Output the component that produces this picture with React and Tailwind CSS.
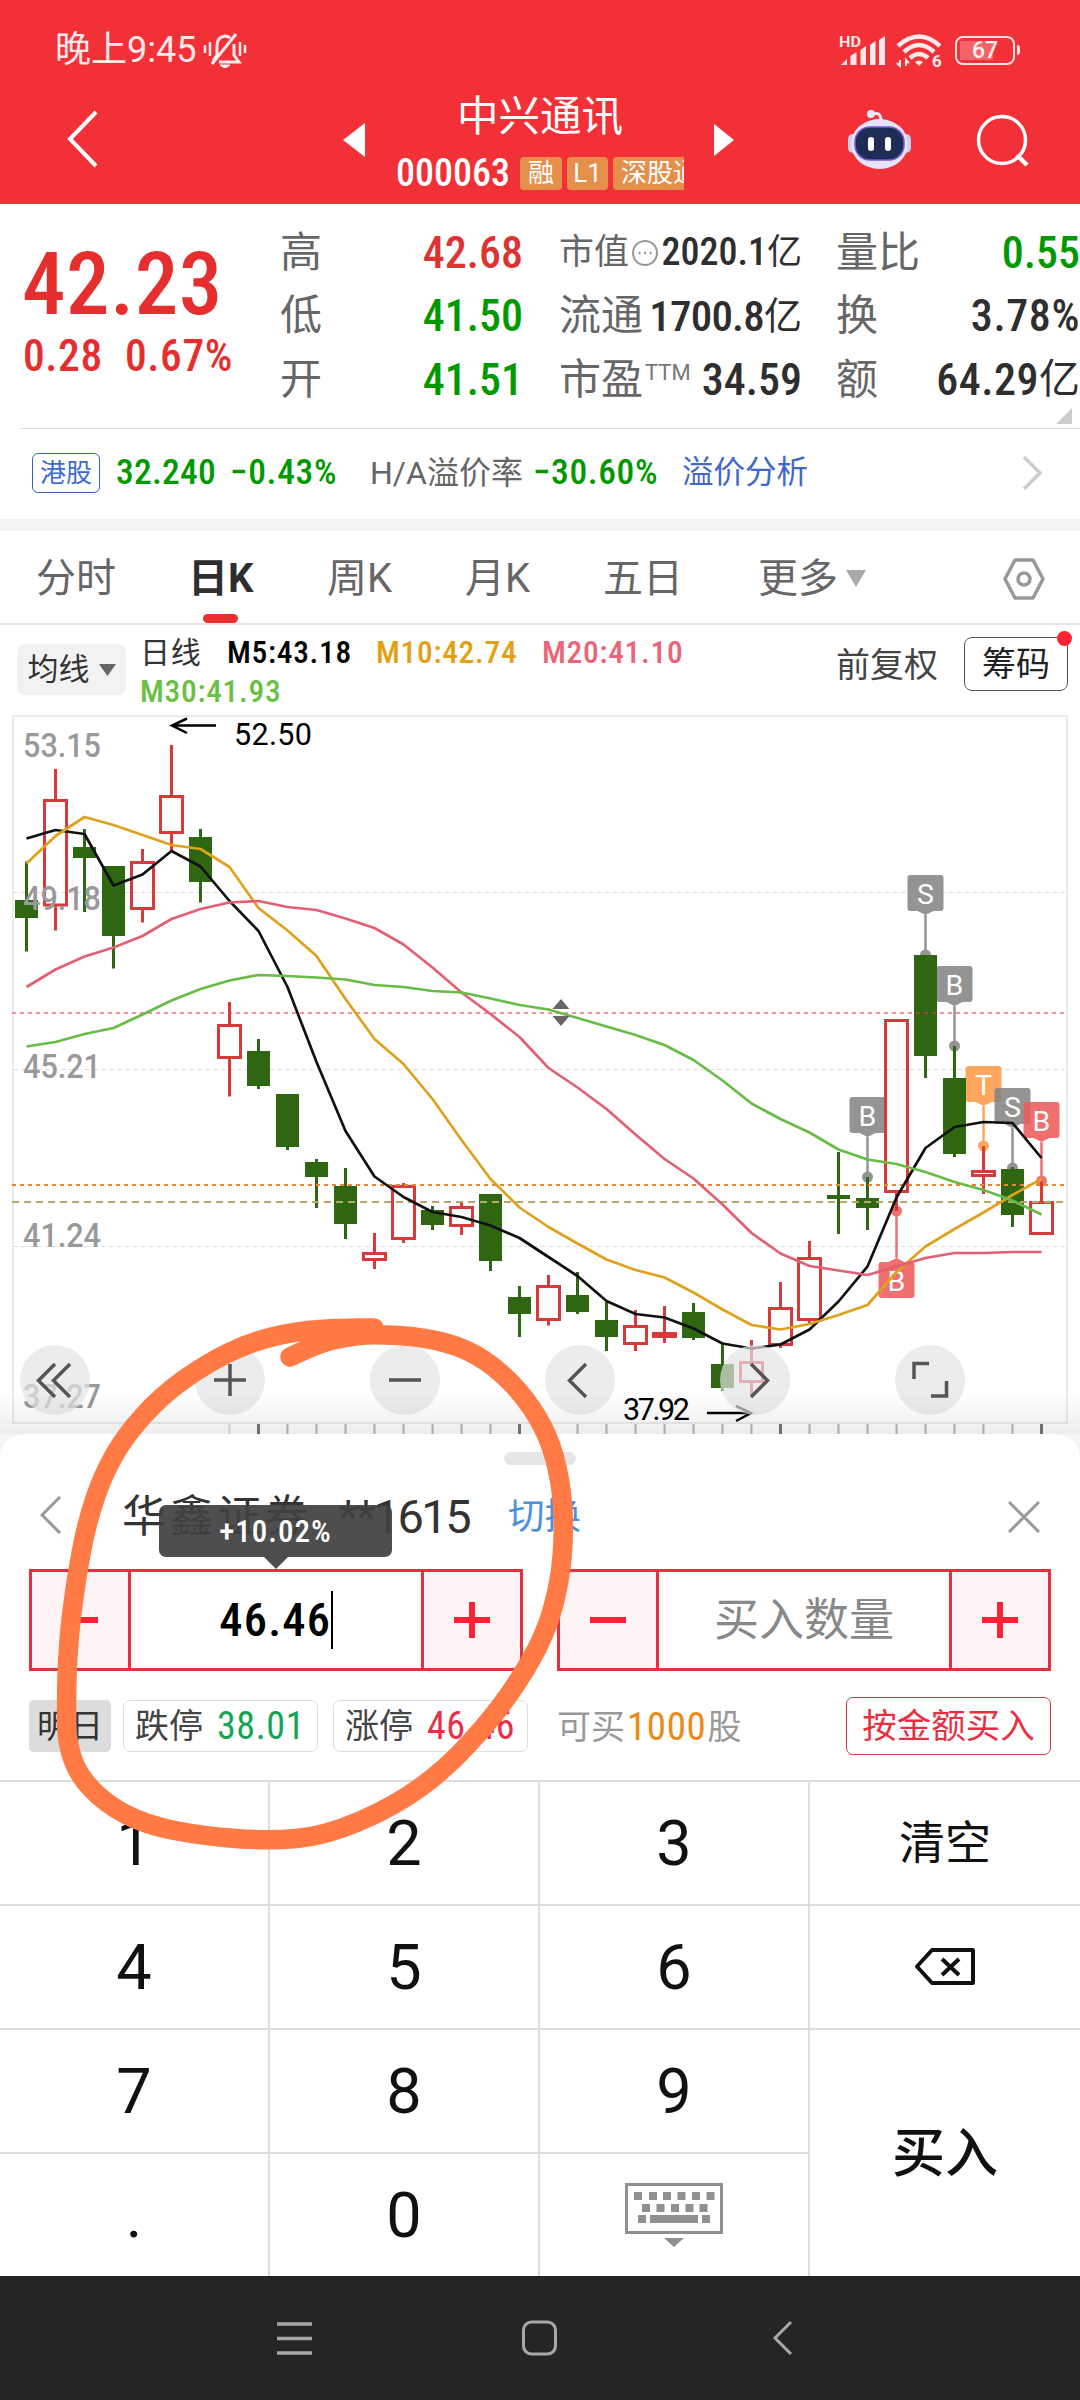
import { clsx } from "clsx";

const RED = "#d63a3a";
const GREEN = "#2f6611";

// [type, high, body top, body bottom, low]
const CANDLES = [
    ["g", 861.5, 900, 918, 951.5],
    ["r", 769, 799, 906.5, 930.5],
    ["g", 829, 847, 858, 912],
    ["g", 866, 866, 936, 968.5],
    ["r", 849, 861, 910, 922.5],
    ["r", 745, 795, 834, 851],
    ["g", 829, 837, 882, 902.5],
    ["r", 1002, 1024, 1059, 1096.5],
    ["g", 1039, 1051, 1086, 1089],
    ["g", 1094, 1094, 1147, 1150],
    ["g", 1159, 1162, 1177, 1208],
    ["g", 1168, 1186, 1224, 1239],
    ["r", 1233, 1252, 1261, 1269],
    ["r", 1183, 1185, 1240, 1243],
    ["g", 1206, 1210, 1225, 1230],
    ["r", 1201, 1206, 1227, 1235],
    ["g", 1194, 1194, 1261, 1271],
    ["g", 1286, 1297, 1314, 1337],
    ["r", 1275, 1285, 1321, 1325.5],
    ["g", 1272, 1295, 1312, 1314],
    ["g", 1302, 1320, 1337, 1351],
    ["r", 1310, 1325, 1345, 1351],
    ["r", 1306, 1332, 1338, 1343],
    ["g", 1303, 1312, 1338, 1340],
    ["g", 1343, 1364, 1388, 1391],
    ["r", 1340, 1361, 1383, 1395],
    ["r", 1282, 1307, 1346, 1348],
    ["r", 1241, 1257, 1321, 1323],
    ["g", 1152, 1195, 1199, 1234],
    ["g", 1177, 1198, 1208, 1230],
    ["r", 1019, 1019, 1193, 1211],
    ["g", 955, 955, 1056, 1078],
    ["g", 1046, 1078, 1154, 1157],
    ["r", 1146, 1170, 1177, 1194],
    ["g", 1167, 1169, 1215, 1227],
    ["r", 1181.5, 1201, 1235, 1235],
];

const MA5 = [
    838.5, 830, 834, 885.5, 874.5, 851, 866.5, 901, 931, 987, 1062, 1131, 1176.5, 1197, 1212, 1217, 1225.5, 1238,
    1257, 1276, 1301, 1314, 1317.5, 1328.5, 1343.5, 1348.5, 1344.5, 1329.5, 1301.5, 1266.5, 1197.5, 1148, 1127,
    1122, 1123, 1158,
];
const MA10 = [
    863.5, 836, 817, 825, 835, 845, 849, 867, 908, 930.5, 956, 999, 1039, 1064, 1099, 1140, 1179, 1207.5, 1227,
    1243.5, 1259.5, 1270, 1277.5, 1292.5, 1309.5, 1325, 1329.5, 1324, 1315, 1305, 1272, 1246.5, 1229, 1212.5, 1195,
    1179,
];
const MA20 = [
    987, 969.5, 956.5, 947.5, 936, 919, 909, 902.5, 901, 907, 910, 918.5, 928, 944.5, 967.5, 992.5, 1014, 1037,
    1068, 1087.5, 1109, 1134.5, 1159, 1178.5, 1204.5, 1233, 1253.5, 1266, 1270.5, 1275, 1266.5, 1258, 1253, 1253,
    1252, 1252,
];
const MA30 = [
    1046.5, 1042, 1034, 1028, 1014.5, 1000.5, 989, 980.5, 975, 976, 977.5, 979.5, 985, 987, 991, 992.5, 998.5, 1005,
    1009.5, 1018, 1026.5, 1035, 1045, 1060, 1080.5, 1103.5, 1119, 1132.5, 1149.5, 1159.5, 1164, 1172, 1182, 1190,
    1200.5, 1214.5,
];

// box = top of the label, dot = price point it refers to
const MARKERS = [
    { i: 29, text: "B", box: 1097, dot: 1177, color: "#868686" },
    { i: 31, text: "S", box: 875, dot: 955, color: "#868686" },
    { i: 32, text: "B", box: 966, dot: 1046, color: "#868686" },
    { i: 33, text: "T", box: 1066, dot: 1146, color: "#ff9a4a" },
    { i: 34, text: "S", box: 1088, dot: 1168, color: "#868686" },
    { i: 35, text: "B", box: 1102, dot: 1181, color: "#ee5c5c" },
    { i: 30, text: "B", box: 1262, dot: 1211, color: "#ee5c5c", below: true },
];

const LOOP = [
    [290, 1357], [317, 1344], [345, 1337], [372, 1334], [424, 1337], [468, 1349], [504, 1374], [533, 1408],
    [552, 1445], [562, 1490], [564, 1535], [560, 1580], [548, 1627], [526, 1670], [494, 1716], [446, 1769],
    [393, 1807], [325, 1836], [268, 1841], [203, 1836], [146, 1825], [106, 1804], [78, 1775], [67, 1742],
    [66.5, 1710], [67, 1665], [71, 1617], [79, 1563], [88, 1519], [103, 1475], [125, 1436], [162, 1395],
    [206, 1364], [248, 1343], [296, 1331], [344, 1328], [374, 1328],
];

const cx = (i) => 26.5 + i * 29;

const toPoints = (values) => values.map((y, i) => `${cx(i)},${y}`).join(" ");

const smooth = (pts) => {
    let d = `M${pts[0][0]} ${pts[0][1]}`;
    for (let i = 1; i < pts.length - 1; i++) {
        const mx = (pts[i][0] + pts[i + 1][0]) / 2;
        const my = (pts[i][1] + pts[i + 1][1]) / 2;
        d += ` Q${pts[i][0]} ${pts[i][1]} ${mx} ${my}`;
    }
    const last = pts[pts.length - 1];
    return `${d} L${last[0]} ${last[1]}`;
};

const Num = ({ className, light }) => clsx(
    "whitespace-nowrap font-stretch-semi-condensed",
    light ? "font-normal" : "font-medium",
    className
);

const Figure = ({ className, light, children }) => (
    <span className={Num({ className, light })}>{children}</span>
);

const StatusBar = () => (
    <div className="flex h-[84px] items-end justify-between pr-[60px] pb-[16px] pl-[55px] text-white/90">
        <div className="flex h-[36px] items-center">
            <span className="text-[36px] leading-none">晚上9:45</span>
            <svg className="ml-[7px]" width="44" height="38" viewBox="0 0 44 38" fill="none" stroke="currentColor" strokeWidth="3">
                <path d="M10 30 L14 24 V15 Q14 6 22 5 Q25 5 27 7 M31 13 V24 L36 31 H16" />
                <path d="M33 3 L9 33" />
                <path d="M7 11 V25 M2 14 V22 M37 11 V25 M42 14 V22" strokeWidth="2.5" />
                <path d="M17 34 Q22 39 27 34 Z" fill="currentColor" strokeWidth="1" />
            </svg>
        </div>
        <div className="flex h-[36px] items-center">
            <svg className="overflow-visible" width="124" height="36" viewBox="0 0 124 36" fill="currentColor">
                <text x="0" y="15" fontSize="15.5" fontWeight="600" textLength="22" lengthAdjust="spacingAndGlyphs">HD</text>
                <path d="M2 33 L8 27 V33Z M11.500 24 L17.500 20 V33 H11.500Z M21.500 18 L27 14 V33 H21.500Z M31 13 L36.500 9 V33 H31Z M40 8 L46 4 V33 H40Z" />
                <g fill="none" stroke="currentColor" strokeWidth="4.5">
                    <path d="M59 14 Q80 -5 101 14" />
                    <path d="M65 20 Q80 6 95 20" />
                    <path d="M71 26 Q80 18 89 26" />
                </g>
                <path d="M76 30 Q80 27 84 30 L80 34Z" />
                <path d="M61 28 V34 L58 31 M67 34 V28 L70 31" fill="none" stroke="currentColor" strokeWidth="2" />
                <text x="93" y="34.500" fontSize="17" fontWeight="700">6</text>
            </svg>
            <div className="flex items-center">
                <div className="ml-[-8px] flex h-[29px] w-[60px] items-center justify-center rounded-[8px] border-[2.5px] border-white/85 p-[3px]">
                    <div className="flex h-full w-full items-center justify-center bg-linear-to-r from-white/25 from-66% to-transparent to-66%">
                        <span className="text-[23px] leading-none font-medium">67</span>
                    </div>
                </div>
                <div className="ml-[2px] h-[10px] w-[3px] rounded-r bg-white/85" />
            </div>
        </div>
    </div>
);

const RobotIcon = () => (
    <svg width="66" height="62" viewBox="0 0 66 62">
        <path d="M24 7 Q34 2 34 13" fill="none" stroke="#eceafc" strokeWidth="3" />
        <circle cx="24" cy="6" r="4" fill="#f3e9fb" />
        <rect x="1" y="26" width="10" height="19" rx="5" fill="#c9cdf2" />
        <rect x="54" y="26" width="10" height="19" rx="5" fill="#c9cdf2" />
        <ellipse cx="32.500" cy="36" rx="28.500" ry="25" fill="#e6e4f9" />
        <rect x="8" y="19" width="49" height="33" rx="15" fill="#1e2d57" stroke="#7a58d8" strokeWidth="1.500" />
        <rect x="21" y="29" width="6" height="14" rx="3" fill="#fff" />
        <rect x="38" y="29" width="6" height="14" rx="3" fill="#fff" />
    </svg>
);

const Header = () => (
    <div className="flex h-[120px] items-start text-white">
        <svg className="mt-[24px] ml-[62px]" width="40" height="62" viewBox="0 0 40 62" fill="none" stroke="#fff" strokeWidth="4">
            <path d="M34 4 L8 31 L34 58" />
        </svg>
        <svg className="mt-[38px] ml-[241px]" width="22" height="36" viewBox="0 0 22 36" fill="#fff">
            <path d="M22 1 V35 L0 18Z" />
        </svg>
        <div className="ml-[31px] flex w-[288px] flex-col">
            <div className="mt-[11px] text-center text-[41.5px] leading-[44px]">中兴通讯</div>
            <div className="mt-[12px] flex h-[44px] items-center overflow-hidden text-[26px] leading-none">
                <Figure className="w-[124px] shrink-0 text-[38px] leading-[44px]">000063</Figure>
                <span className="flex h-[33px] w-[42px] shrink-0 items-center justify-center rounded bg-[#e58f4a]">融</span>
                <span className="ml-[5px] flex h-[33px] w-[41px] shrink-0 items-center justify-center rounded bg-[#e58f4a]">L1</span>
                <span className="ml-[5px] flex h-[33px] w-[94px] shrink-0 items-center rounded bg-[#e58f4a] pl-[8px]">深股通</span>
            </div>
        </div>
        <svg className="mt-[39px] ml-[30px]" width="20" height="34" viewBox="0 0 20 34" fill="#fff">
            <path d="M0 1 V33 L20 17Z" />
        </svg>
        <div className="mt-[24px] ml-[113px]">
            <RobotIcon />
        </div>
        <svg className="mt-[28px] ml-[61px]" width="58" height="58" viewBox="0 0 58 58" fill="none" stroke="#fff" strokeWidth="3.500">
            <circle cx="28" cy="28" r="23.500" />
            <path d="M43 43 L53 53" strokeWidth="4.500" />
        </svg>
    </div>
);

const Cell = ({ label, children }) => (
    <div className="flex h-[63.5px] items-center justify-between">
        <span className="flex items-center text-[42px] leading-none text-[#666]">{label}</span>
        {children}
    </div>
);

const Quote = () => (
    <div className="flex h-[224px] pl-[22px]">
        <div className="w-[258px] text-[#e52f2f]">
            <Figure className="mt-[35px] block text-[87px] leading-[90px] tracking-[0.5px]">42.23</Figure>
            <div className="flex h-[56px] items-center pl-[1px] text-[43.5px] leading-none tracking-[0.6px]">
                <Figure className="w-[102px]">0.28</Figure>
                <Figure>0.67%</Figure>
            </div>
        </div>
        <div className="mt-[17px] w-[243px]">
            <Cell label="高"><Figure className="text-[44px] text-[#dc3333]">42.68</Figure></Cell>
            <Cell label="低"><Figure className="text-[44px] text-[#009900]">41.50</Figure></Cell>
            <Cell label="开"><Figure className="text-[44px] text-[#009900]">41.51</Figure></Cell>
        </div>
        <div className="mt-[17px] ml-[36px] w-[243px] text-[#2e2e2e]">
            <div className="flex h-[63.5px] items-center text-[35px]">
                <span className="text-[#666]">市值</span>
                <svg className="ml-[2px]" width="28" height="28" viewBox="0 0 28 28" fill="none" stroke="#999" strokeWidth="2">
                    <circle cx="14" cy="14" r="12" />
                    <path d="M7.500 14h2 M13 14h2 M18.500 14h2" strokeWidth="2.500" />
                </svg>
                <span className="ml-auto flex items-center"><Figure className="text-[38px]">2020.1</Figure>亿</span>
            </div>
            <Cell label="流通"><span className="flex items-center text-[38px]"><Figure className="text-[43px] tracking-[-0.8px]">1700.8</Figure>亿</span></Cell>
            <Cell label={<>市盈<span className="mb-[14px] ml-[2px] text-[22px] text-[#777]">TTM</span></>}>
                <Figure className="text-[44px]">34.59</Figure>
            </Cell>
        </div>
        <div className="relative mt-[17px] ml-[34px] w-[244px] text-[#2e2e2e]">
            <Cell label="量比"><Figure className="text-[44px] text-[#009900]">0.55</Figure></Cell>
            <Cell label="换"><Figure className="text-[44px] tracking-[0.6px]">3.78%</Figure></Cell>
            <Cell label="额"><span className="flex items-center text-[41px]"><Figure className="text-[44px] tracking-[0.5px]">64.29</Figure>亿</span></Cell>
            <svg className="absolute right-[8px] bottom-[4px]" width="16" height="16" viewBox="0 0 16 16" fill="#ccc">
                <path d="M16 0 V16 H0Z" />
            </svg>
        </div>
    </div>
);

const HkRow = () => (
    <div className="ml-[20px] flex h-[91px] items-center border-t border-[#ddd] pb-[3px] pl-[12px] text-[32px] leading-none">
        <span className="flex h-[40px] w-[68px] items-center justify-center rounded-[6px] border border-[#3a64b8] text-[26px] text-[#3b6ad0]">港股</span>
        <Figure className="ml-[16px] w-[114px] text-[35.5px] tracking-[0.2px] text-[#009900]">32.240</Figure>
        <Figure className="w-[140px] text-[35.5px] tracking-[0.7px] text-[#009900]">−0.43%</Figure>
        <span className="w-[163px]  text-[#666]">H/A溢价率</span>
        <Figure className="w-[149px] text-[35.5px] tracking-[0.6px] text-[#009900]">−30.60%</Figure>
        <span className="text-[31.5px] text-[#3f68c8]">溢价分析</span>
        <svg className="mr-[38px] ml-auto" width="20" height="34" viewBox="0 0 20 34" fill="none" stroke="#ccc" strokeWidth="3.500">
            <path d="M2 1 L18 17 L2 33" />
        </svg>
    </div>
);

const Tabs = () => (
    <div className="flex h-[94px] items-center border-b-2 border-[#e6e6e6] pt-[3px] pl-[36px] text-[40px] leading-none text-[#666]">
        <span className="w-[152px]">分时</span>
        <span className="relative w-[139px] font-bold text-[#2e2e2e]">
            日K
            <span className="absolute top-[55px] left-[15px] h-[9px] w-[35px] rounded-full bg-[#e83030]" />
        </span>
        <span className="w-[138px]">周K</span>
        <span className="w-[138px]">月K</span>
        <span className="w-[155px]">五日</span>
        <span>更多</span>
        <svg className="ml-[8px]" width="20" height="17" viewBox="0 0 20 17" fill="#aaa">
            <path d="M0 0 H20 L10 17Z" />
        </svg>
        <svg className="mr-[34px] ml-auto" width="44" height="42" viewBox="0 0 44 42" fill="none" stroke="#999" strokeWidth="3.500">
            <path d="M13 2 H31 L41 21 L31 40 H13 L3 21Z" strokeLinejoin="round" />
            <circle cx="22" cy="21" r="6" />
        </svg>
    </div>
);

const MaRow = () => (
    <div className="flex h-[88px] items-start pl-[17px]">
        <div className="mt-[19px] flex h-[51px] w-[109px] items-center justify-center gap-[9px] rounded-[8px] bg-[#f2f2f2] text-[31px] leading-none text-[#333]">
            均线
            <svg width="17" height="12" viewBox="0 0 17 12" fill="#666">
                <path d="M0 0 H17 L8.500 12Z" />
            </svg>
        </div>
        <div className="mt-[8px] ml-[14px] w-[602px] text-[31.5px] leading-[39px] tracking-[0.7px]">
            <div className="flex">
                <span className="w-[87px] text-[30px] text-[#333]">日线</span>
                <Figure className="w-[149px] text-black">M5:43.18</Figure>
                <Figure className="w-[166px] text-[#e2a013]">M10:42.74</Figure>
                <Figure className="text-[#ec6478]">M20:41.10</Figure>
            </div>
            <Figure className="text-[#6abf45]">M30:41.93</Figure>
        </div>
        <span className="mt-[22px] ml-[94px] text-[34px] leading-[36px] text-[#444]">前复权</span>
        <div className="relative mt-[12px] mr-[12px] ml-auto flex h-[54px] w-[104px] items-center justify-center rounded-[8px] border-[1.5px] border-[#555] text-[34px] leading-none text-[#222]">
            筹码
            <span className="absolute -top-[7px] -right-[5px] size-[15px] rounded-full bg-[#fd2533]" />
        </div>
    </div>
);

const Marker = ({ i, text, box, dot, color, below }) => {
    const x = cx(i);
    const tip = below ? box - 4 : box + 40;
    const base = below ? box : box + 36;
    return (
        <g fill={color} opacity="0.88">
            <path d={`M${x} ${tip} V${dot}`} stroke={color} strokeWidth="2.500" />
            <circle cx={x} cy={dot} r="5.500" />
            <rect x={x - 18} y={box} width="36" height="36" rx="3" />
            <path d={`M${x - 8} ${base} H${x + 8} L${x} ${tip}Z`} />
            <text x={x} y={box + 28.5} fontSize="28.500" fill="#fff" textAnchor="middle">{text}</text>
        </g>
    );
};

const Candle = ({ i, data }) => {
    const [type, high, top, bottom, low] = data;
    const x = cx(i);
    if (type === "g") {
        return (
            <g fill={GREEN}>
                <rect x={x - 1.5} y={high} width="3" height={low - high} />
                <rect x={x - 11.5} y={top} width="23" height={bottom - top} />
            </g>
        );
    }
    return (
        <g stroke={RED} strokeWidth="3" fill="none">
            <path d={`M${x} ${high} V${top} M${x} ${bottom} V${low}`} />
            <rect x={x - 11} y={top + 1.5} width="22" height={bottom - top - 3} />
        </g>
    );
};

const RoundButton = ({ x, children }) => (
    <g fill="none" stroke="#555" strokeWidth="3.500">
        <circle cx={x} cy="1380" r="35" fill="#e4e4e4" fillOpacity="0.7" stroke="none" />
        {children}
    </g>
);

const Chart = () => (
    <svg className="block h-[721px] w-[1080px]" viewBox="0 713 1080 721">
        <defs>
            <linearGradient id="sheetShadow" x1="0" x2="0" y1="0" y2="1">
                <stop offset="0" stopColor="#000" stopOpacity="0" />
                <stop offset="1" stopColor="#000" stopOpacity="0.07" />
            </linearGradient>
        </defs>
        <rect x="13" y="716" width="1054" height="707" fill="none" stroke="#ebebeb" strokeWidth="2" />
        <g stroke="#dcdcdc" strokeWidth="1.200" strokeDasharray="4.500 3.500">
            <path d="M13 892.500 H1065 M13 1069.500 H1065 M13 1246.500 H1065" />
        </g>

        {MARKERS.map((m) => <Marker key={m.i} {...m} />)}
        {CANDLES.map((c, i) => <Candle key={i} i={i} data={c} />)}

        <path d="M12 1013 H1065" stroke="#ea3b4c" strokeOpacity="0.55" strokeWidth="1.800" strokeDasharray="4 4" />
        <path d="M12 1185 H1065" stroke="#ea8430" strokeWidth="2" strokeDasharray="4 4" />
        <path d="M12 1202 H1065" stroke="#b9a768" strokeWidth="2" strokeDasharray="7 5" />

        <g fill="none" strokeWidth="2.700" strokeLinejoin="round">
            <polyline points={toPoints(MA5)} stroke="#111" />
            <polyline points={toPoints(MA10)} stroke="#dfa11c" />
            <polyline points={toPoints(MA20)} stroke="#e35f74" />
            <polyline points={toPoints(MA30)} stroke="#68bc45" />
        </g>
        <path d="M561 999 L569.500 1009 H552.500Z M552.500 1016 H569.500 L561 1026Z" fill="#666" />

        <g fontSize="34" fontWeight="500" fill="#999">
            <text x="23" y="757" textLength="78" lengthAdjust="spacingAndGlyphs">53.15</text>
            <text x="23" y="910" textLength="78" lengthAdjust="spacingAndGlyphs">49.18</text>
            <text x="23" y="1078" textLength="78" lengthAdjust="spacingAndGlyphs">45.21</text>
            <text x="23" y="1247" textLength="78" lengthAdjust="spacingAndGlyphs">41.24</text>
            <text x="23" y="1408" textLength="78" lengthAdjust="spacingAndGlyphs">37.27</text>
        </g>
        <g fontSize="30.500" fill="#000">
            <text x="234" y="745" textLength="78">52.50</text>
            <text x="623" y="1420" textLength="67">37.92</text>
        </g>
        <g fill="none" stroke="#000" strokeWidth="2.500">
            <path d="M216 725.500 H173 M187 718.500 L172 725.500 L187 733" />
            <path d="M707 1413 H751 M736 1406 L751 1413 L736 1421" />
        </g>

        <RoundButton x={55}><path d="M55 1364 L38.500 1380.500 L55 1397 M70 1364 L53.500 1380.500 L70 1397" /></RoundButton>
        <RoundButton x={230}><path d="M214 1380 H246 M230 1364 V1396" /></RoundButton>
        <RoundButton x={405}><path d="M389 1380 H421" /></RoundButton>
        <RoundButton x={580}><path d="M586 1364 L569.500 1380.500 L586 1397" /></RoundButton>
        <RoundButton x={755}><path d="M751 1364 L767.500 1380.500 L751 1397" /></RoundButton>
        <RoundButton x={930}><path d="M929 1363.500 H914 V1379 M946.500 1381 V1396 H931" /></RoundButton>

        <g>
            {CANDLES.map((_, i) => {
                if (i < 7) return null;
                const major = i % 9 === 8;
                return (
                    <rect
                        key={i}
                        x={cx(i) - (major ? 1.5 : 1)}
                        y="1424"
                        width={major ? 3 : 2}
                        height="10"
                        fill={major ? "#777" : "#b5b5b5"}
                        opacity={i < 8 ? 0.5 : 1}
                    />
                );
            })}
        </g>
        <rect x="0" y="1392" width="1080" height="42" fill="url(#sheetShadow)" />
    </svg>
);

const SheetTitle = () => (
    <div className="flex h-[104px] items-start px-[40px]">
        <svg className="mt-[31px]" width="22" height="38" viewBox="0 0 22 38" fill="none" stroke="#999" strokeWidth="3">
            <path d="M20 1 L2 19 L20 37" />
        </svg>
        <span className="mt-[26px] ml-[60px] w-[216px] text-[44px] leading-[52px] tracking-[3.6px] text-[#333]">华鑫证券</span>
        <span className="mt-[26px] w-[170px] text-[47px] leading-[52px] tracking-[-2.5px] text-[#333]">**1615</span>
        <span className="mt-[26px] text-[36.5px] leading-[52px] text-[#4a90dd]">切换</span>
        <svg className="mt-[36px] ml-auto" width="32" height="32" viewBox="0 0 32 32" fill="none" stroke="#999" strokeWidth="3">
            <path d="M1 1 L31 31 M31 1 L1 31" />
        </svg>
    </div>
);

const StepButton = ({ plus }) => (
    <div className="flex w-[96px] items-center justify-center bg-[#fef4f6]">
        <svg width="36" height="36" viewBox="0 0 36 36" stroke="#fb2238" strokeWidth="6">
            <path d={plus ? "M0 18 H36 M18 0 V36" : "M0 18 H36"} />
        </svg>
    </div>
);

const Stepper = ({ children }) => (
    <div className="flex h-[102px] w-[494px] border-3 border-[#e63042]">
        <StepButton />
        <div className="relative flex flex-1 items-center justify-center border-x-3 border-[#e63042]">{children}</div>
        <StepButton plus />
    </div>
);

const OrderInputs = () => (
    <div className="flex justify-between px-[29px]">
        <Stepper>
            <Figure className="text-[46.5px] leading-none tracking-[1.2px] text-black">46.46</Figure>
            <span className="h-[58px] w-[1.500px] bg-black" />
            <div className="absolute -top-[67px] left-[28px] flex h-[52px] w-[233px] items-center justify-center rounded-[7px] bg-[#414141]/93 pt-[3px] text-[31px] text-white">
                <Figure className="tracking-[1px]">+10.02%</Figure>
                <svg className="absolute top-[52px] left-[105px]" width="24" height="12" viewBox="0 0 24 12" fill="#4e4e4e">
                    <path d="M0 0 H24 L12 12Z" />
                </svg>
            </div>
        </Stepper>
        <Stepper>
            <span className="text-[45px] leading-none text-[#888]">买入数量</span>
        </Stepper>
    </div>
);

const OrderHints = () => (
    <div className="flex h-[110px] items-start px-[29px] pt-[29px] text-[34px] leading-none text-[#444]">
        <span className="flex h-[52px] w-[82px] items-center justify-center rounded-[5px] bg-[#dcdcdc] text-[33px] text-[#333]">明日</span>
        <span className="ml-[12px] flex h-[52px] w-[195px] items-center rounded-[7px] border border-[#ddd] pl-[11px]">
            跌停<Figure light className="ml-[14px] text-[38px] tracking-[0.6px] text-[#15a552]">38.01</Figure>
        </span>
        <span className="ml-[15px] flex h-[52px] w-[195px] items-center rounded-[7px] border border-[#ddd] pl-[11px]">
            涨停<Figure light className="ml-[14px] text-[38px] tracking-[0.6px] text-[#e8304a]">46.46</Figure>
        </span>
        <span className="ml-[29px] flex h-[54px] items-center text-[#999]">
            可买<Figure light className="mr-[1px] ml-[2px] text-[39px] tracking-[0.6px] text-[#ec8a18]">1000</Figure>股
        </span>
        <span className="-mt-[3px] ml-auto flex h-[58px] w-[205px] items-center justify-center rounded-[7px] border border-[#cf3b49] text-[34.5px] text-[#e83042]">
            按金额买入
        </span>
    </div>
);

const KeyboardIcon = () => (
    <svg className="-mt-[1px]" width="98" height="64" viewBox="0 0 98 64" fill="#909090">
        <rect x="1.500" y="1.500" width="95" height="48" fill="none" stroke="#909090" strokeWidth="3" />
        {[9, 24, 38, 52.5, 67, 81.5].map((x) => <rect key={x} x={x} y="9" width="8" height="8" />)}
        {[17, 31.5, 46, 60.5, 74.5].map((x) => <rect key={x} x={x} y="21" width="8" height="8" />)}
        <path d="M13 32h8v8h-8z M25 32h48v8h-48z M77 32h8v8h-8z M39 55h20l-10 9z" />
    </svg>
);

const Key = ({ className, last, children }) => (
    <div className={clsx("flex items-center justify-center border-t-2 border-[#dcdcdc]", !last && "border-r-2", className)}>
        {children}
    </div>
);

const Keypad = () => (
    <div className="grid h-[496px] grid-cols-[270px_270px_270px_270px] grid-rows-4 text-[63px] leading-none text-[#111]">
        <Key>1</Key>
        <Key>2</Key>
        <Key>3</Key>
        <Key last className="text-[46px]">清空</Key>
        <Key>4</Key>
        <Key>5</Key>
        <Key>6</Key>
        <Key last>
            <svg width="62" height="40" viewBox="0 0 62 40" fill="none" stroke="#111" strokeWidth="4">
                <path d="M18 3 H59 V36 H18 L3 19.500Z" strokeLinejoin="round" />
                <path d="M28 12 L45 28 M45 12 L28 28" />
            </svg>
        </Key>
        <Key>7</Key>
        <Key>8</Key>
        <Key>9</Key>
        <Key last className="row-span-2 pt-[2px] text-[53px] font-medium">买入</Key>
        <Key>.</Key>
        <Key>0</Key>
        <Key><KeyboardIcon /></Key>
    </div>
);

const NavBar = () => (
    <div className="flex h-[124px] items-center bg-[#252525]">
        <svg className="block h-[40px] w-[1080px]" viewBox="0 2318 1080 40" fill="none" stroke="#a8a8a8" strokeWidth="3">
            <path d="M277 2324 H312 M277 2338.500 H312 M277 2353 H312" strokeWidth="3.500" />
            <rect x="523.500" y="2322" width="32" height="32" rx="8" />
            <path d="M791 2322 L775 2338 L791 2354" />
        </svg>
    </div>
);

const App = () => (
    <div className="relative flex h-[2400px] w-[1080px] flex-col overflow-hidden bg-white font-['Roboto','Noto_Sans_CJK_SC',sans-serif]">
        <div className="h-[204px] bg-[#f13038]">
            <StatusBar />
            <Header />
        </div>
        <Quote />
        <HkRow />
        <div className="h-[12px] shrink-0 bg-[#f4f4f4]" />
        <Tabs />
        <MaRow />
        <Chart />

        {/* Order sheet */}
        <div className="bg-[#f4f4f4]">
            <div className="h-[346px] rounded-t-[24px] bg-white">
                <div className="flex h-[31px] items-end justify-center">
                    <div className="h-[13px] w-[72px] rounded-full bg-[#e6e6e6]" />
                </div>
                <SheetTitle />
                <OrderInputs />
                <OrderHints />
            </div>
        </div>
        <Keypad />
        <NavBar />

        {/* Hand-drawn highlight */}
        <svg className="pointer-events-none absolute inset-0" width="1080" height="2400" viewBox="0 0 1080 2400">
            <path d={smooth(LOOP)} fill="none" stroke="#ff7a45" strokeWidth="19.500" strokeLinecap="round" strokeLinejoin="round" />
        </svg>
    </div>
);

export default App;
